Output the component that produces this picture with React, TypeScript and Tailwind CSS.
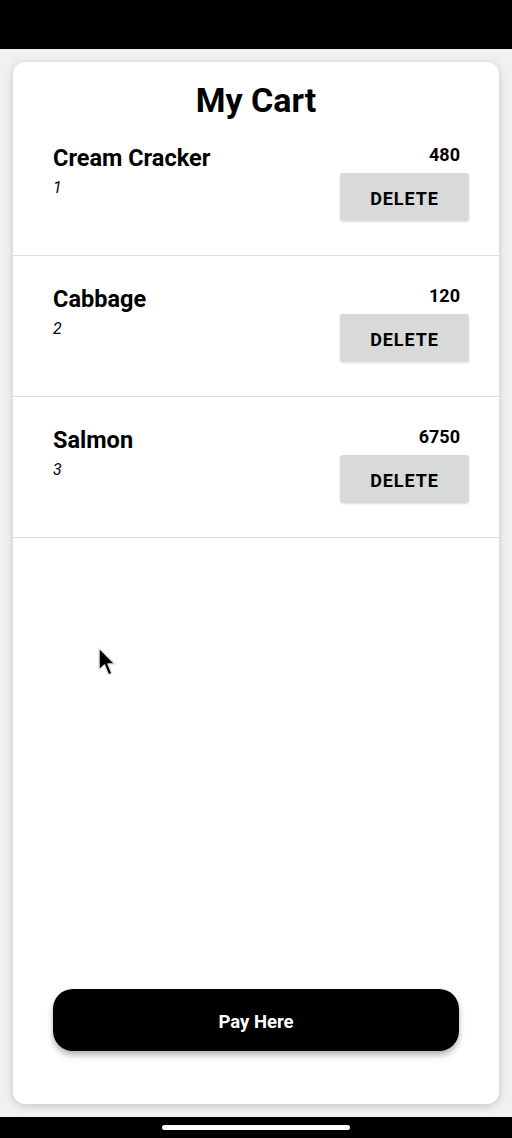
type CartItem = {
  id: number;
  name: string;
  qty: number;
  price: number;
};

const items: CartItem[] = [
  { id: 1, name: "Cream Cracker", qty: 1, price: 480 },
  { id: 2, name: "Cabbage", qty: 2, price: 120 },
  { id: 3, name: "Salmon", qty: 3, price: 6750 },
];

function CartRow({ item }: { item: CartItem }) {
  return (
    <div className="flex h-[141px] justify-between border-b border-[#dedede] pt-[29px] pl-[40px] pr-[30px]">
      <div>
        <div className="text-[23.5px] font-bold leading-[28px] text-black">
          {item.name}
        </div>
        <div className="mt-[6px] text-[16px] italic leading-[20px] text-black">
          {item.qty}
        </div>
      </div>
      <div className="flex flex-col items-end">
        <div className="pr-[9px] text-[18px] font-bold leading-[22px] text-black">
          {item.price}
        </div>
        <button className="mt-[7px] flex h-[48px] w-[129px] items-center justify-center rounded-[3px] bg-[#d8d9d9] pt-[2px] text-[18px] font-bold tracking-[0.05em] text-black shadow-sm">
          DELETE
        </button>
      </div>
    </div>
  );
}

export default function App() {
  return (
    <div className="relative flex h-[1138px] w-[512px] flex-col bg-black font-['Roboto',sans-serif]">
      <div className="h-[49px] shrink-0 bg-black" />

      <div className="flex flex-1 flex-col bg-[#f1f1f1] px-[13px] py-[13px]">
        <div className="flex flex-1 flex-col rounded-xl bg-white shadow-[0_2px_8px_rgba(0,0,0,0.18)]">
          <div className="h-[53px] pt-[18px] text-center">
            <h1 className="text-[34px] font-bold leading-[40px] text-black">
              My Cart
            </h1>
          </div>

          {items.map((item) => (
            <CartRow key={item.id} item={item} />
          ))}

          <button className="mx-[40px] mt-auto mb-[53px] flex h-[62px] items-center justify-center rounded-[20px] bg-black pt-[5px] text-[18.5px] font-bold text-white shadow-[0_4px_6px_rgba(0,0,0,0.3)]">
            Pay Here
          </button>
        </div>
      </div>

      <div className="flex h-[21px] shrink-0 justify-center bg-black pt-[8px]">
        <div className="h-[5px] w-[188px] rounded-full bg-white" />
      </div>

      {/* mouse pointer */}
      <svg
        className="absolute left-[96px] top-[646px]"
        width="24"
        height="34"
        viewBox="0 0 24 34"
      >
        <path
          d="M3 2 L3 24 L8.5 19 L12.5 29 L16 27.5 L12 18 L19 18 Z"
          fill="#000"
          stroke="#e6e6e6"
          strokeWidth="1.5"
          strokeLinejoin="round"
        />
      </svg>
    </div>
  );
}
